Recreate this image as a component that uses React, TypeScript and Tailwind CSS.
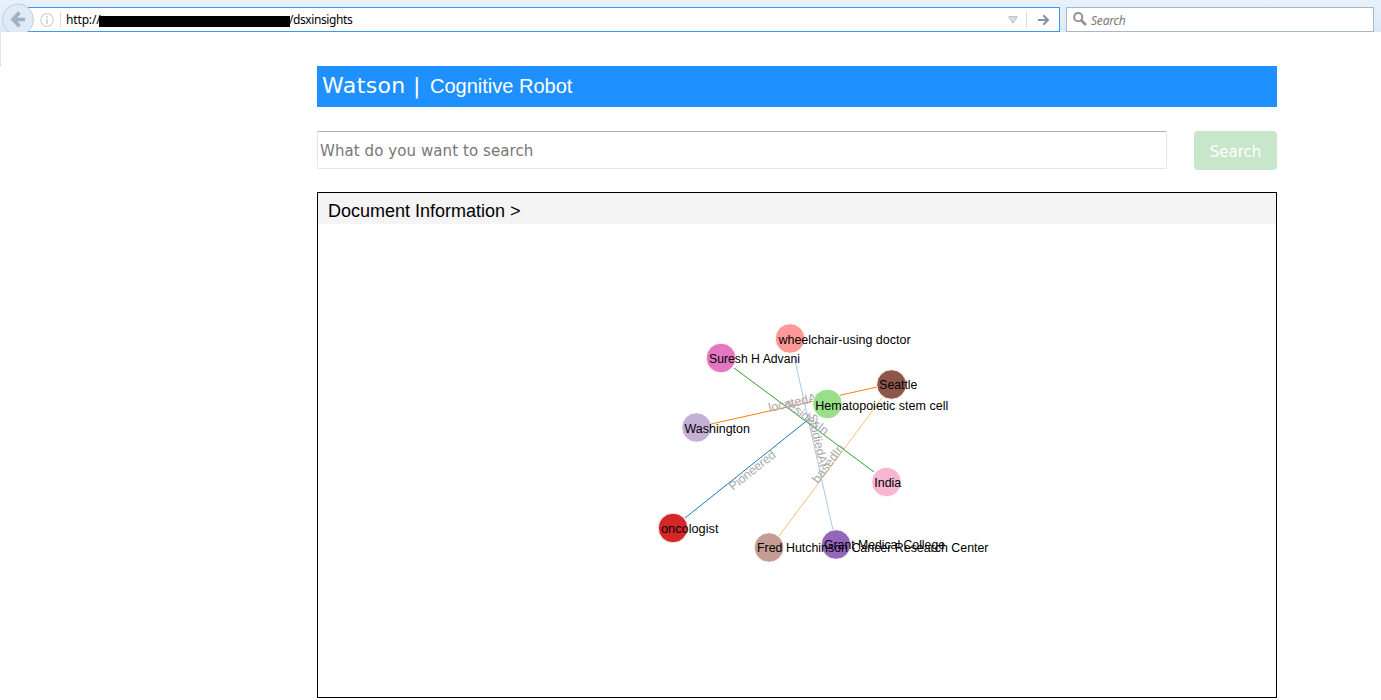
type GraphNode = { id: string; x: number; y: number; color: string; lx: number; ly: number; width: number };
type GraphEdge = { label: string; x1: number; y1: number; x2: number; y2: number; color: string; tx: number; ty: number; width: number };

const nodes: GraphNode[] = [
  { id: 'wheelchair-using doctor', x: 790, y: 338.5, color: '#ff9896', lx: 778.4, ly: 344, width: 132.3 },
  { id: 'Suresh H Advani', x: 721, y: 358, color: '#e377c2', lx: 709, ly: 363, width: 91 },
  { id: 'Seattle', x: 891.5, y: 384.5, color: '#8c564b', lx: 879.3, ly: 389, width: 38 },
  { id: 'Hematopoietic stem cell', x: 827.5, y: 404, color: '#98df8a', lx: 815.3, ly: 410, width: 133 },
  { id: 'Washington', x: 696.5, y: 427.5, color: '#c5b0d5', lx: 684.5, ly: 432.5, width: 65.5 },
  { id: 'India', x: 886.5, y: 482, color: '#f7b6d2', lx: 874.3, ly: 487, width: 27 },
  { id: 'oncologist', x: 673, y: 528, color: '#d62728', lx: 661, ly: 533, width: 57.5 },
  { id: 'Grant Medical College', x: 836, y: 544.5, color: '#9467bd', lx: 824, ly: 549, width: 121 },
  { id: 'Fred Hutchinson Cancer Research Center', x: 769, y: 547.5, color: '#c49c94', lx: 757, ly: 552, width: 231.5 },
];

const edges: GraphEdge[] = [
  { label: 'Pioneered', x1: 685, y1: 518, x2: 809, y2: 419, color: '#1f77b4', tx: 733, ty: 491, width: 56 },
  { label: 'StudiedAt', x1: 794, y1: 356, x2: 833, y2: 530, color: '#aec7e8', tx: 808, ty: 415, width: 54 },
  { label: 'locatedAt', x1: 711, y1: 424, x2: 877, y2: 387, color: '#ff7f0e', tx: 769.5, ty: 412, width: 52 },
  { label: 'basedIn', x1: 779, y1: 536, x2: 882, y2: 398, color: '#ffbb78', tx: 818, ty: 484, width: 45 },
  { label: 'residesIn', x1: 734, y1: 368, x2: 874, y2: 472, color: '#2ca02c', tx: 784, ty: 405, width: 51 },
];

function Toolbar() {
  return (
    <header className="relative flex h-8 items-start bg-linear-to-b from-[#e8f1fa] to-[#dbe9f7] pt-[7px] font-['Noto_Sans','Open_Sans',sans-serif] text-xs">
      <div className="ml-[28px] flex h-[25px] w-[1032px] shrink-0 items-center border border-[#3d96f0] bg-white pr-[9px]">
        <svg className="ml-[11px] size-[14px] shrink-0" viewBox="0 0 14 14" fill="none" stroke="#d4d4d4">
          <circle cx="7" cy="7" r="6.3" strokeWidth="1.2" />
          <path d="M7 3v2M7 6v5" strokeWidth="1.7" />
        </svg>
        <span className="ml-[6px] h-[17px] w-px bg-[#d9dde2]" />
        <span className="mt-px ml-[5px] flex items-center whitespace-nowrap text-black">
          <span className="w-[33px] tracking-[-0.15px]">http://</span>
          <span className="mt-[3px] h-[11px] w-[191px] bg-black" />
          <span className="-ml-px tracking-[-0.45px]">/</span>
          <span className="tracking-[-0.4px]">dsxinsights</span>
        </span>
        <span className="grow" />
        <svg className="h-[8px] w-[10px]" viewBox="0 0 10 8">
          <path d="M.7.7h8.6L5 7.2z" fill="#dce3ea" stroke="#b5bcc4" />
        </svg>
        <span className="ml-[8px] h-[17px] w-px bg-[#d9dde2]" />
        <svg className="ml-[11px] h-[12px] w-[12px]" viewBox="0 0 12 12" fill="none" stroke="#8392a3" strokeWidth="2">
          <path d="M0 6h10M5.2 1.2 10 6l-4.8 4.8" />
        </svg>
      </div>
      <div className="ml-[6px] flex h-[25px] w-[308px] shrink-0 items-center border border-[#a6b6cb] bg-white pl-[6px]">
        <svg className="mb-px size-[14px]" viewBox="0 0 14 14" fill="none" stroke="#929292">
          <circle cx="5.2" cy="5.2" r="4.1" strokeWidth="2" />
          <path d="m8.2 8.2 4.8 4.8" strokeWidth="2.7" />
        </svg>
        <span className="mt-[2px] ml-[4px] tracking-[-0.2px] text-[#777] italic">Search</span>
      </div>
      <svg className="absolute top-0 left-0 h-8 w-9" viewBox="0 0 36 32">
        <circle cx="18" cy="19.5" r="15.5" fill="#dfeaf6" stroke="#c2cedb" />
        <path d="M25 19.5H13.5M19.5 12.5l-6.5 7 6.5 6.7" fill="none" stroke="#a3b0bf" strokeWidth="3.7" />
      </svg>
    </header>
  );
}

function Graph() {
  return (
    <svg className="block h-[473px] w-[958px]" viewBox="318 224 958 473" fontFamily="'Liberation Sans', Arial, sans-serif" fontSize="12">
      {edges.map((e) => (
        <line key={e.label} x1={e.x1} y1={e.y1} x2={e.x2} y2={e.y2} stroke={e.color} />
      ))}
      {edges.map((e) => {
        const angle = (Math.atan2(e.y2 - e.y1, e.x2 - e.x1) * 180) / Math.PI;
        return (
          <text key={e.label} transform={`translate(${e.tx} ${e.ty}) rotate(${angle})`} fill="#aaa" fontSize="12.5" textLength={e.width}>
            {e.label}
          </text>
        );
      })}
      {nodes.map((n) => (
        <circle key={n.id} cx={n.x} cy={n.y} r="14.8" fill={n.color} stroke="#fff" strokeWidth="0.9" />
      ))}
      {nodes.map((n) => (
        <text key={n.id} x={n.lx} y={n.ly} fill="#000" textLength={n.width} lengthAdjust="spacingAndGlyphs">
          {n.id}
        </text>
      ))}
    </svg>
  );
}

export default function App() {
  return (
    <div className="h-[700px] w-[1381px] overflow-hidden bg-white">
      <Toolbar />
      <div className="h-[34px] w-px border-b border-[#b5c8dc] bg-[#dbe9f7]" />
      <main className="ml-[317px] w-[960px]">
        <h1 className="flex h-[41px] items-center bg-[#1e90ff] pl-[5px] whitespace-nowrap text-white">
          <span className="-mt-[3px] w-[108px] font-['DejaVu_Sans',Verdana,sans-serif] text-[22px] tracking-[0.4px]">Watson |</span>
          <span className="-mt-px font-['Liberation_Sans',Arial,sans-serif] text-[20px]">Cognitive Robot</span>
        </h1>
        <div className="mt-6 flex justify-between font-['DejaVu_Sans',Verdana,sans-serif]">
          <input
            className="h-[38px] w-[850px] rounded-[2px] border border-[#e3e5ea] border-t-[#aaadb3] bg-white px-[2px] pt-[2px] text-[15px] tracking-[0.08px] placeholder:text-[#777] placeholder:opacity-100"
            placeholder="What do you want to search"
          />
          <button className="h-[39px] w-[83px] rounded-[4px] bg-[#c8e6c9] pt-[3px] text-[15px] text-white">Search</button>
        </div>
        <section className="mt-[22px] h-[506px] border border-black">
          <h2 className="flex h-[31px] items-center bg-[#f4f4f4] pt-[5px] pl-[10px] font-['Liberation_Sans',Arial,sans-serif] text-[18px] text-black">
            Document Information &gt;
          </h2>
          <Graph />
        </section>
      </main>
    </div>
  );
}
